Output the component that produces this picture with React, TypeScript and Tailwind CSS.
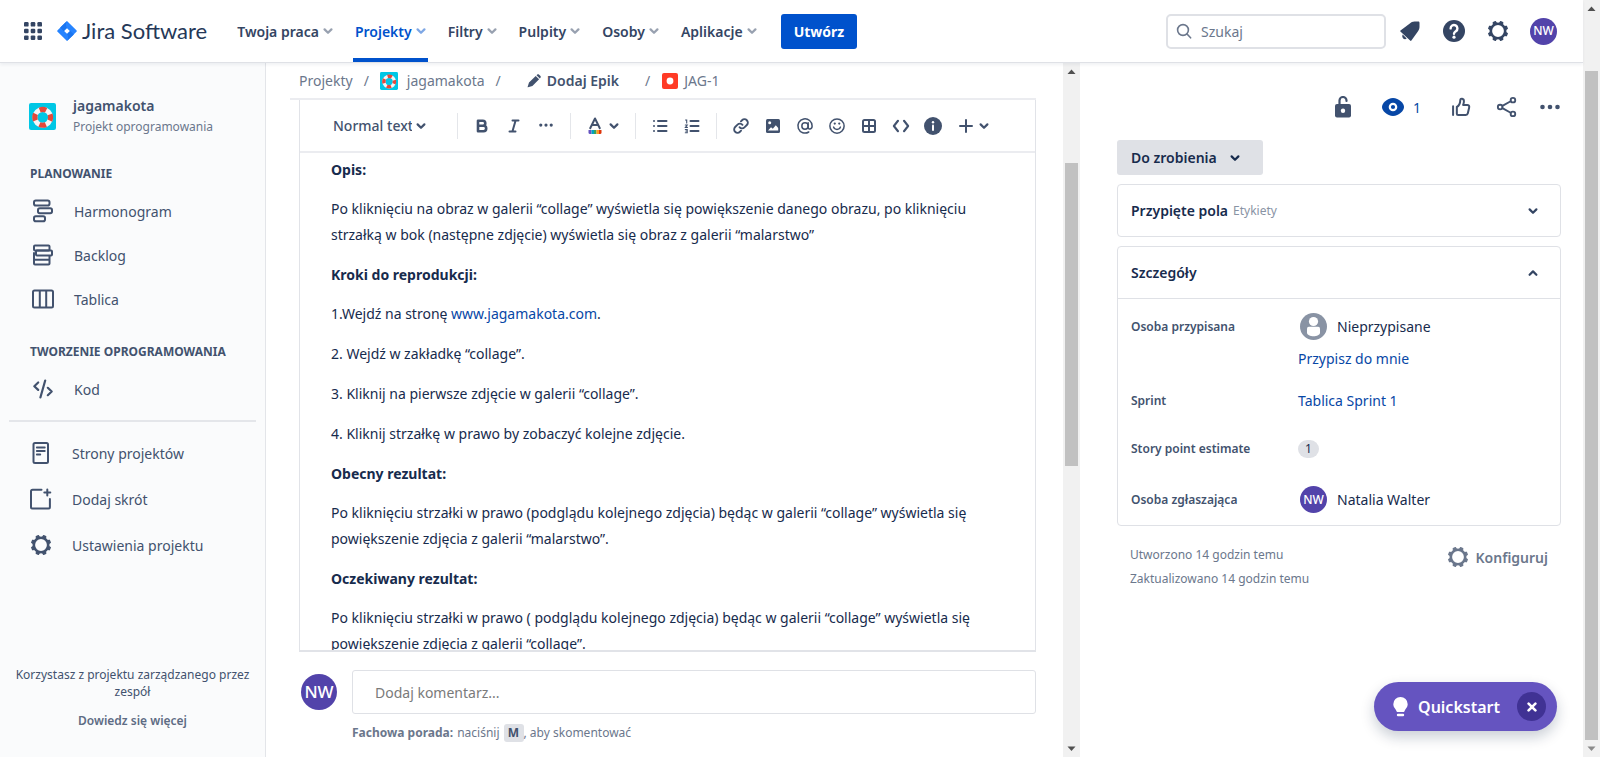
import React from "react";

type IconProps = { className?: string };

const Svg = ({ className = "size-6", children }: IconProps & { children: React.ReactNode }) => (
  <svg viewBox="0 0 24 24" className={`shrink-0 ${className}`} fill="none" stroke="currentColor" strokeWidth="2" strokeLinecap="round" strokeLinejoin="round" aria-hidden="true">
    {children}
  </svg>
);

const Chevron = ({ className = "size-[10px]", up = false }: IconProps & { up?: boolean }) => (
  <svg viewBox="0 0 10 10" className={`shrink-0 ${className}`} fill="none" stroke="currentColor" strokeWidth="2.2" strokeLinecap="round" strokeLinejoin="round" aria-hidden="true">
    <path d={up ? "M1.6 6.8 5 3.4l3.4 3.4" : "M1.6 3.4 5 6.8l3.4-3.4"} />
  </svg>
);

const Gear = ({ className }: IconProps) => (
  <Svg className={className}>
    <circle cx="12" cy="12" r="7.2" strokeWidth="2.6" />
    {[22.5, 67.5, 112.5, 157.5, 202.5, 247.5, 292.5, 337.5].map((a) => (
      <path key={a} d="M10.3 4.6 10.8 2.4h2.4l.5 2.200z" fill="currentColor" strokeWidth="1.2" transform={`rotate(${a} 12 12)`} />
    ))}
  </Svg>
);

const Lifebuoy = ({ className }: IconProps) => (
  <svg viewBox="0 0 26 26" className={`shrink-0 ${className}`} aria-hidden="true">
    <rect width="26" height="26" rx="2" fill="#00c7e5" />
    <circle cx="13.200" cy="13.800" r="7.600" fill="none" stroke="#f4f5f7" strokeWidth="4.800" />
    <circle cx="13.200" cy="13.800" r="7.600" fill="none" stroke="#e5493a" strokeWidth="5" strokeDasharray="6.400 5.540" strokeDashoffset="3.200" />
  </svg>
);

const Avatar = ({ className }: IconProps) => (
  <span className={`flex shrink-0 items-center justify-center rounded-full bg-[#5243aa] font-medium text-white ${className}`}>NW</span>
);

const AppGrid = () => (
  <svg viewBox="0 0 18 18" className="size-[18px]" fill="currentColor" aria-hidden="true">
    {[0, 6.7, 13.4].map((y) => [0, 6.7, 13.4].map((x) => <rect key={`${x}-${y}`} x={x} y={y} width="4.6" height="4.6" rx="1.2" />))}
  </svg>
);

const JiraMark = () => (
  <svg viewBox="0 0 20 20" className="size-5" aria-hidden="true">
    <path d="M10 0 19.4 9.2a1.1 1.1 0 0 1 0 1.6L10 20 .6 10.8a1.1 1.1 0 0 1 0-1.6z" fill="#2684ff" />
    <path d="M10 0c-1.600 2-1.500 5 0 7L6.800 10.200 3.200 6.600z" fill="#1a75f0" />
    <path d="M10 20c1.600-2 1.500-5 0-7l3.200-3.200 3.600 3.600z" fill="#1a75f0" />
    <path d="M10 7.200 12.800 10 10 12.800 7.200 10z" fill="#fff" />
  </svg>
);

const Roadmap = () => (
  <Svg className="size-6">
    <rect x="3" y="1.500" width="15.500" height="5" rx="1.800" />
    <rect x="7" y="9.300" width="14" height="5" rx="1.800" />
    <rect x="3" y="17.200" width="11" height="5" rx="1.800" />
  </Svg>
);
const Backlog = () => (
  <Svg className="size-6">
    <rect x="3" y="2.500" width="15.500" height="5" rx="1" />
    <rect x="5" y="7.500" width="16" height="5" rx="1" />
    <path d="M3 10v10.500a1 1 0 0 0 1 1h13.500a1 1 0 0 0 1-1V13M3 16.700h15.500" />
  </Svg>
);
const Board = () => (
  <Svg className="size-6">
    <rect x="2" y="3.500" width="20" height="17" rx="1.500" />
    <path d="M8.800 4v16M15.200 4v16" />
  </Svg>
);
const CodeSlash = () => (
  <Svg className="size-6">
    <path d="M7.200 5.500 3.300 9.200l3.900 3.700M14.200 3.500 9.400 20.500M16.800 10.800l3.900 3.700-3.900 3.700" strokeWidth="2.200" />
  </Svg>
);
const PageIcon = () => (
  <Svg className="size-6">
    <rect x="4.500" y="2" width="14.500" height="20" rx="1.500" />
    <path d="M7.800 6.500h8M7.800 10h8M7.800 13.500h3.500" strokeWidth="1.800" />
  </Svg>
);
const AddShortcut = () => (
  <Svg className="size-6">
    <path d="M12.500 2.800H3.600A1.600 1.600 0 0 0 2 4.400v15.500a1.600 1.600 0 0 0 1.600 1.600h15.700a1.600 1.600 0 0 0 1.600-1.600V12" />
    <path d="M18.300 2.600v6M15.300 5.600h6" />
  </Svg>
);

const Dots = ({ className }: IconProps) => (
  <svg viewBox="0 0 20 6" className={`shrink-0 ${className}`} fill="currentColor" aria-hidden="true">
    <circle cx="2.500" cy="3" r="2.300" />
    <circle cx="10" cy="3" r="2.300" />
    <circle cx="17.500" cy="3" r="2.300" />
  </svg>
);

const nav = [
  { label: "Twoja praca" },
  { label: "Projekty", active: true },
  { label: "Filtry" },
  { label: "Pulpity" },
  { label: "Osoby" },
  { label: "Aplikacje" },
];

function Header() {
  return (
    <header className="z-10 flex h-[63px] shrink-0 items-center border-b border-[#dfe1e6] bg-white pr-[26px] pl-6 text-[#344563] shadow-[0_2px_3px_rgba(9,30,66,0.06)]">
      <button aria-label="Aplikacje Atlassian" className="text-[#344563]"><AppGrid /></button>
      <a href="#" className="ml-[15px] flex items-center gap-[5px] text-[#253858]">
        <JiraMark />
        <span className="font-['Lato','Noto_Sans',sans-serif] text-[22px] leading-6">Jira Software</span>
      </a>
      <nav className="ml-[28px] flex gap-[18px] self-stretch">
        {nav.map((n) => (
          <button key={n.label} className={n.active ? "flex items-center gap-1 border-b-4 border-[#0052cc] px-[2px] pt-1 text-[#0052cc]" : "flex items-center gap-1 border-b-4 border-transparent px-[2px] pt-1"}>
            <span className="text-[14px] font-semibold">{n.label}</span>
            <Chevron className="size-[10px] opacity-50" />
          </button>
        ))}
      </nav>
      <button className="ml-[22px] h-[35px] rounded-[3px] bg-[#0052cc] px-[13px] text-[14px] font-bold text-white">Utwórz</button>
      <div className="ml-auto flex items-center">
        <label className="flex h-[35px] w-[220px] items-center gap-[9px] rounded-[5px] border-2 border-[#dfe1e6] px-[8px]">
          <svg viewBox="0 0 16 16" className="size-4 shrink-0 text-[#6b778c]" fill="none" stroke="currentColor" strokeWidth="1.600" strokeLinecap="round" aria-hidden="true">
            <circle cx="7" cy="7" r="5.400" />
            <path d="m11 11 3.600 3.800" />
          </svg>
          <input aria-label="Szukaj" placeholder="Szukaj" className="w-full min-w-0 bg-transparent text-[14px] outline-none placeholder:text-[#6b778c]" />
        </label>
        <button aria-label="Powiadomienia" className="ml-3">
          <svg viewBox="0 0 24 24" className="size-6" fill="currentColor" aria-hidden="true">
            <path d="M2.500 11.400 11.500 4.800c1.800-1.300 3-2.200 5-2.200h3.700c.8 0 1.300.5 1.300 1.300v4c0 1.900-.7 3-2 5L13.400 21.500c-.3.500-.9.500-1.300 0L2.400 12.500c-.3-.3-.3-.8.1-1.100z" />
            <path d="M4.700 15.600 8.700 19.600c-1 .9-2.500.9-3.500-.1s-1.300-2.700-.5-3.900z" />
          </svg>
        </button>
        <button aria-label="Pomoc" className="ml-5">
          <svg viewBox="0 0 24 24" className="size-6" aria-hidden="true">
            <circle cx="12" cy="12" r="11" fill="currentColor" />
            <path d="M8.600 9.400a3.400 3.400 0 1 1 5.300 2.800c-1.200.8-1.900 1.200-1.900 2.600" fill="none" stroke="#fff" strokeWidth="2.400" strokeLinecap="round" />
            <circle cx="12" cy="18.200" r="1.600" fill="#fff" />
          </svg>
        </button>
        <button aria-label="Ustawienia" className="ml-5"><Gear className="size-6" /></button>
        <button aria-label="Profil" className="ml-5"><Avatar className="size-[27px] text-[12px]" /></button>
      </div>
    </header>
  );
}

function SideLink({ icon, label, tight = false }: { icon: React.ReactNode; label: string; tight?: boolean }) {
  return (
    <a href="#" className={tight ? "flex h-[46px] items-center gap-[19px] pl-[29px]" : "flex h-11 items-center gap-[19px] pl-[31px]"}>
      {icon}
      <span className="text-[14px]">{label}</span>
    </a>
  );
}

function Sidebar() {
  return (
    <aside className="flex w-[266px] shrink-0 flex-col border-r border-[#e3e5e9] bg-[#fafbfc] text-[#42526e]">
      <div className="mt-8 flex items-center gap-[17px] pl-[29px]">
        <Lifebuoy className="size-[27px]" />
        <div>
          <div className="text-[14px] leading-[21px] font-semibold">jagamakota</div>
          <div className="text-[12px] leading-[21px] text-[#6b778c]">Projekt oprogramowania</div>
        </div>
      </div>
      <h2 className="mt-[29px] pl-[30px] text-[12px] leading-4 font-bold">PLANOWANIE</h2>
      <nav className="mt-[7px]">
        <SideLink icon={<Roadmap />} label="Harmonogram" />
        <SideLink icon={<Backlog />} label="Backlog" />
        <SideLink icon={<Board />} label="Tablica" />
      </nav>
      <h2 className="mt-[23px] pl-[30px] text-[12px] leading-4 font-bold">TWORZENIE OPROGRAMOWANIA</h2>
      <nav className="mt-[7px]">
        <SideLink icon={<CodeSlash />} label="Kod" />
      </nav>
      <hr className="mx-[9px] mt-[9px] mb-2 border-t-2 border-[#e4e6ea]" />
      <nav>
        <SideLink tight icon={<PageIcon />} label="Strony projektów" />
        <SideLink tight icon={<AddShortcut />} label="Dodaj skrót" />
        <SideLink tight icon={<Gear className="size-6" />} label="Ustawienia projektu" />
      </nav>
      <div className="mt-auto mb-7 text-center text-[12px] leading-[17px]">
        <p>Korzystasz z projektu zarządzanego przez zespół</p>
        <a href="#" className="mt-3 block font-semibold text-[#5e6c84]">Dowiedz się więcej</a>
      </div>
    </aside>
  );
}

const Tool = ({ label, children }: { label: string; children: React.ReactNode }) => (
  <button aria-label={label} className="flex size-8 shrink-0 items-center justify-center">{children}</button>
);
const Rule = () => <span className="mx-2 h-[26px] w-px shrink-0 bg-[#e4e6ea]" />;

function Toolbar() {
  return (
    <div className="flex h-[53px] shrink-0 items-center border-b-2 border-[#ebecf0] pl-[33px] text-[#42526e]">
      <button className="mr-[23px] flex w-[93px] items-center gap-1 text-[14px] font-medium">
        <span className="w-[79px] overflow-hidden text-left whitespace-nowrap">Normal text</span>
        <Chevron />
      </button>
      <Rule />
      <Tool label="Pogrubienie">
        <svg viewBox="0 0 16 16" className="size-4" fill="none" stroke="currentColor" strokeWidth="2.600" strokeLinejoin="round" aria-hidden="true">
          <path d="M4 2.800h4.800a2.500 2.500 0 0 1 0 5H4zM4 7.800h5.500a2.700 2.700 0 0 1 0 5.400H4z" />
        </svg>
      </Tool>
      <Tool label="Kursywa">
        <svg viewBox="0 0 16 16" className="size-4" fill="none" stroke="currentColor" strokeWidth="2" strokeLinecap="round" aria-hidden="true">
          <path d="M6.500 2.500h6M3.500 13.500h6M9.600 2.500l-3.200 11" />
        </svg>
      </Tool>
      <Tool label="Więcej formatowania"><Dots className="w-[14px]" /></Tool>
      <Rule />
      <button aria-label="Kolor tekstu" className="mx-2 flex items-center gap-[6px]">
        <svg viewBox="0 0 16 18" className="h-[18px] w-4" aria-hidden="true">
          <path d="M3.200 11.200 8 1.500l4.800 9.700M5 8h6" fill="none" stroke="currentColor" strokeWidth="2" strokeLinecap="round" strokeLinejoin="round" />
          <path d="M1.500 13h3v4h-1.500a1.500 1.500 0 0 1-1.500-1.500z" fill="#6554c0" />
          <path d="M4.500 13H7v4H4.500z" fill="#00a3bf" />
          <path d="M7 13h2.500v4H7z" fill="#36a35e" />
          <path d="M9.500 13H12v4H9.500z" fill="#ff991f" />
          <path d="M12 13h2.500v2.500A1.500 1.500 0 0 1 13 17h-1z" fill="#de350b" />
        </svg>
        <Chevron />
      </button>
      <Rule />
      <Tool label="Lista punktowana">
        <svg viewBox="0 0 16 16" className="size-4" fill="none" stroke="currentColor" strokeWidth="2" strokeLinecap="round" aria-hidden="true">
          <path d="M2 3h.01M2 8h.01M2 13h.01M6 3h8.500M6 8h8.500M6 13h8.500" />
        </svg>
      </Tool>
      <Tool label="Lista numerowana">
        <svg viewBox="0 0 16 16" className="size-4" fill="none" stroke="currentColor" strokeWidth="2" strokeLinecap="round" aria-hidden="true">
          <path d="M6.500 3h8M6.500 8h8M6.500 13h8" />
          <path d="M1.500 2h1.200v3M1.300 7h1.900L1.400 9.400h2M1.300 11.500h1.900v3.200H1.300M1.800 13h1.300" strokeWidth="1.100" />
        </svg>
      </Tool>
      <Rule />
      <Tool label="Link">
        <Svg className="size-[18px]">
          <path d="M10 13.500a4.500 4.500 0 0 0 6.600.4l3.200-3.200a4.500 4.500 0 0 0-6.400-6.400l-1.500 1.500M14 10.500a4.500 4.500 0 0 0-6.600-.4l-3.200 3.200a4.500 4.500 0 0 0 6.400 6.400l1.500-1.500" strokeWidth="2.500" />
        </Svg>
      </Tool>
      <Tool label="Obraz">
        <svg viewBox="0 0 16 16" className="size-4" aria-hidden="true">
          <rect x="1" y="1" width="14" height="14" rx="1.500" fill="currentColor" />
          <circle cx="4.700" cy="4.800" r="1.500" fill="#fff" />
          <path d="M3 12.500 6 9.200l1.800 1.600 3-3.600 2.400 2.800v2.500z" fill="#fff" />
        </svg>
      </Tool>
      <Tool label="Wzmianka">
        <Svg className="size-[18px]">
          <circle cx="12" cy="12" r="4.200" />
          <path d="M16.200 7.500v6c0 3.800 5.300 3.300 5.300-1.500a9.500 9.500 0 1 0-4.500 8" />
        </Svg>
      </Tool>
      <Tool label="Emoji">
        <Svg className="size-[18px]">
          <circle cx="12" cy="12" r="9.500" />
          <path d="M7.500 13.500c1.200 4 7.800 4 9 0" />
          <path d="M9 8.800h.01M15 8.800h.01" strokeWidth="3" />
        </Svg>
      </Tool>
      <Tool label="Tabela">
        <svg viewBox="0 0 16 16" className="size-4" fill="none" stroke="currentColor" strokeWidth="2" aria-hidden="true">
          <rect x="2" y="2" width="12" height="12" rx="1.500" />
          <path d="M8 2v12M2 8h12" />
        </svg>
      </Tool>
      <Tool label="Fragment kodu">
        <Svg className="size-[18px]"><path d="M8 5 2.500 12 8 19M16 5l5.500 7L16 19" strokeWidth="2.800" /></Svg>
      </Tool>
      <Tool label="Panel informacyjny">
        <svg viewBox="0 0 18 18" className="size-[18px]" aria-hidden="true">
          <circle cx="9" cy="9" r="9" fill="currentColor" />
          <circle cx="9" cy="5.300" r="1.200" fill="#fff" />
          <path d="M9 8.500v4.500" stroke="#fff" strokeWidth="2" strokeLinecap="round" />
        </svg>
      </Tool>
      <button aria-label="Wstaw" className="ml-[10px] flex items-center gap-[6px]">
        <svg viewBox="0 0 14 14" className="size-[14px]" stroke="currentColor" strokeWidth="2" strokeLinecap="round" aria-hidden="true"><path d="M7 1v12M1 7h12" /></svg>
        <Chevron />
      </button>
    </div>
  );
}

const H = ({ children }: { children: React.ReactNode }) => <h3 className="mb-[13px] font-bold">{children}</h3>;
const P = ({ children }: { children: React.ReactNode }) => <p className="mb-[14px]">{children}</p>;

function Issue() {
  return (
    <main className="flex min-w-0 flex-1 flex-col pr-[27px] pl-6">
      <div className="flex h-[37px] shrink-0 items-center border-b-2 border-[#ebecf0] pl-[9px] text-[14px] text-[#6b778c]">
        <a href="#">Projekty</a>
        <span className="mx-[11px]">/</span>
        <a href="#" className="flex items-center gap-[9px]"><Lifebuoy className="size-[18px]" />jagamakota</a>
        <span className="mx-[11px]">/</span>
        <button className="ml-[15px] flex items-center gap-[6px] font-semibold text-[#42526e]">
          <svg viewBox="0 0 14 14" className="size-[14px]" fill="currentColor" aria-hidden="true">
            <path d="M2 8.600 8.700 1.900l3.400 3.400L5.400 12 1 13.300c-.3.100-.5-.2-.4-.4zM9.500 1.200 10.300.5c.5-.4 1.200-.4 1.600 0l1.600 1.600c.4.400.4 1.100 0 1.600l-.7.800z" />
          </svg>
          Dodaj Epik
        </button>
        <span className="mr-[12px] ml-[26px]">/</span>
        <svg viewBox="0 0 16 16" className="mr-[6px] size-4" aria-hidden="true">
          <rect width="16" height="16" rx="2" fill="#ff3b26" />
          <circle cx="8" cy="8" r="3.400" fill="#fff" />
        </svg>
        <a href="#">JAG-1</a>
      </div>
      <section className="ml-[9px] flex min-h-0 flex-1 flex-col border-x border-b-2 border-[#e1e3e8]">
        <Toolbar />
        <div className="min-h-0 flex-1 overflow-hidden px-[31px] pt-1 text-[14px] leading-[26px] text-[#172b4d]">
          <H>Opis:</H>
          <P>Po kliknięciu na obraz w galerii “collage” wyświetla się powiększenie danego obrazu, po kliknięciu strzałką w bok (następne zdjęcie) wyświetla się obraz z galerii “malarstwo”</P>
          <H>Kroki do reprodukcji:</H>
          <P>1.Wejdź na stronę <a href="#" className="text-[#0747a6]">www.jagamakota.com</a>.</P>
          <P>2. Wejdź w zakładkę “collage”.</P>
          <P>3. Kliknij na pierwsze zdjęcie w galerii “collage”.</P>
          <P>4. Kliknij strzałkę w prawo by zobaczyć kolejne zdjęcie.</P>
          <H>Obecny rezultat:</H>
          <P>Po kliknięciu strzałki w prawo (podglądu kolejnego zdjęcia) będąc w galerii “collage” wyświetla się powiększenie zdjęcia z galerii “malarstwo”.</P>
          <H>Oczekiwany rezultat:</H>
          <P>Po kliknięciu strzałki w prawo ( podglądu kolejnego zdjęcia) będąc w galerii “collage” wyświetla się powiększenie zdjęcia z galerii “collage”.</P>
        </div>
      </section>
      <div className="flex shrink-0 gap-[15px] pt-[18px] pb-[15px] pl-[11px]">
        <Avatar className="mt-1 size-9 text-[17px]" />
        <div className="min-w-0 flex-1">
          <input aria-label="Dodaj komentarz" placeholder="Dodaj komentarz..." className="block h-11 w-full rounded-[3px] border border-[#dfe1e6] px-[22px] text-[14px] outline-none placeholder:text-[#7a7a7a]" />
          <p className="mt-[10px] flex h-[18px] items-center text-[12px] text-[#6b778c]">
            <b className="mr-1 font-bold">Fachowa porada:</b>naciśnij
            <kbd className="ml-1 flex h-[18px] w-5 items-center justify-center rounded-[3px] bg-[#dfe1e6] font-[inherit] font-bold text-[#42526e]">M</kbd>, aby skomentować
          </p>
        </div>
      </div>
    </main>
  );
}

const Arrow = ({ down = false, className = "text-[#505050]" }: IconProps & { down?: boolean }) => (
  <svg viewBox="0 0 17 17" className={`size-[17px] shrink-0 ${className}`} fill="currentColor" aria-hidden="true">
    <path d={down ? "M4.500 6.500h8L8.500 11z" : "M4.500 11h8L8.500 6.500z"} />
  </svg>
);

function Details() {
  return (
    <aside className="flex w-[503px] shrink-0 flex-col pr-[22px] pl-[37px] text-[14px] text-[#172b4d]">
      <div className="mt-[29px] flex h-[30px] items-center justify-end pr-px text-[#42526e]">
        <button aria-label="Ograniczenia">
          <svg viewBox="0 0 18 22" className="h-[22px] w-[18px]" aria-hidden="true">
            <rect x="1" y="8" width="16" height="13.500" rx="2" fill="currentColor" />
            <path d="M5.500 8V4.500a3.500 3.500 0 0 1 7 0V5" fill="none" stroke="currentColor" strokeWidth="2.200" strokeLinecap="round" />
            <circle cx="9" cy="14.700" r="2.200" fill="#fff" />
          </svg>
        </button>
        <button aria-label="Obserwujący" className="ml-[30px] flex items-center gap-[9px] text-[#0747a6]">
          <svg viewBox="0 0 22 18" className="h-[18px] w-[22px]" aria-hidden="true">
            <path d="M11 0C17 0 22 5.500 22 9s-5 9-11 9S0 12.500 0 9s5-9 11-9z" fill="currentColor" />
            <circle cx="11" cy="9" r="3.200" fill="none" stroke="#fff" strokeWidth="2.200" />
          </svg>
          1
        </button>
        <button aria-label="Głosuj" className="ml-[30px]">
          <Svg className="size-5">
            <path d="M2.500 11v10.500M7 12c3-1.500 4-4 4.200-8.500.1-2 4.300-2 4.300 1.500 0 2-.5 3.500-1 4.500h5c1.800 0 2.700 1.500 2.300 3l-1.600 7c-.3 1.300-1.300 2-2.500 2H8.500c-1 0-1.500-.6-1.500-1.500z" strokeWidth="2.400" />
          </Svg>
        </button>
        <button aria-label="Udostępnij" className="ml-[25px]">
          <Svg className="size-[22px]">
            <circle cx="4.500" cy="12" r="2.500" />
            <circle cx="18.500" cy="4.500" r="2.500" />
            <circle cx="18.500" cy="19.500" r="2.500" />
            <path d="M7 10.800 16 5.800M7 13.200l9 5" />
          </Svg>
        </button>
        <button aria-label="Czynności" className="ml-[22px]"><Dots className="w-5" /></button>
      </div>
      <button className="mt-[18px] flex h-[35px] w-[146px] shrink-0 items-center gap-[13px] self-start rounded-[3px] bg-[#dfe1e6] pl-[14px] font-semibold">
        Do zrobienia <Chevron />
      </button>
      <button className="mt-[9px] flex h-[53px] shrink-0 items-center rounded-[4px] border border-[#dfe1e6] pr-[22px] pl-[13px]">
        <span className="font-semibold">Przypięte pola</span>
        <span className="ml-[5px] text-[12px] text-[#8993a4]">Etykiety</span>
        <Chevron className="ml-auto size-[10px] text-[#344563]" />
      </button>
      <section className="mt-[9px] shrink-0 rounded-[4px] border border-[#dfe1e6]">
        <button className="flex h-[52px] w-full items-center border-b border-[#dfe1e6] pr-[22px] pl-[13px]">
          <span className="font-semibold">Szczegóły</span>
          <Chevron up className="ml-auto size-[10px] text-[#344563]" />
        </button>
        <dl className="grid grid-cols-[167px_1fr] pt-[14px] pb-3 pl-[13px] [&_dt]:text-[12px] [&_dt]:font-semibold [&_dt]:text-[#42526e]">
          <dt className="leading-[27px]">Osoba przypisana</dt>
          <dd className="pb-[17px]">
            <div className="flex h-[27px] items-center gap-[10px] pl-[2px]">
              <svg viewBox="0 0 27 27" className="size-[27px]" aria-hidden="true">
                <circle cx="13.500" cy="13.500" r="13.500" fill="#8993a4" />
                <circle cx="13.500" cy="8.500" r="4.600" fill="#fff" />
                <path d="M7 15.500A1.800 1.800 0 0 1 8.800 13.700h9.400a1.800 1.800 0 0 1 1.800 1.800v4c0 5-13 5-13 0z" fill="#fff" />
              </svg>
              Nieprzypisane
            </div>
            <a href="#" className="mt-[6px] block leading-[26px] text-[#0747a6]">Przypisz do mnie</a>
          </dd>
          <dt className="leading-6">Sprint</dt>
          <dd className="h-12 leading-6"><a href="#" className="text-[#0747a6]">Tablica Sprint 1</a></dd>
          <dt className="leading-6">Story point estimate</dt>
          <dd className="h-[49px] pt-[3px]"><span className="flex h-[18px] w-[21px] items-center justify-center rounded-full bg-[#dfe1e6] text-[12px]">1</span></dd>
          <dt className="leading-[27px]">Osoba zgłaszająca</dt>
          <dd className="flex h-[27px] items-center gap-[10px] pl-[2px]"><Avatar className="size-[27px] text-[12px]" />Natalia Walter</dd>
        </dl>
      </section>
      <div className="mt-[17px] flex justify-between pr-[13px] pl-[13px] text-[#6b778c]">
        <div className="text-[12px] leading-6">
          <p>Utworzono 14 godzin temu</p>
          <p>Zaktualizowano 14 godzin temu</p>
        </div>
        <button className="flex h-7 items-center gap-[6px] font-semibold"><Gear className="size-6" />Konfiguruj</button>
      </div>
    </aside>
  );
}

export default function App() {
  return (
    <div className="flex h-screen overflow-hidden bg-white font-['Noto_Sans','Open_Sans',sans-serif]">
      <div className="relative flex min-w-0 flex-1 flex-col">
        <Header />
        <div className="flex min-h-0 flex-1">
          <Sidebar />
          <Issue />
          <div className="flex w-[17px] shrink-0 flex-col items-center bg-[#f1f1f1]">
            <Arrow />
            <div className="flex w-full flex-1 flex-col items-center">
              <div className="h-[12.500%] shrink-0" />
              <div className="h-[46%] w-[13px] shrink-0 bg-[#c1c1c1]" />
            </div>
            <Arrow down />
          </div>
          <Details />
        </div>
        <div className="absolute right-[26px] bottom-[26px] flex h-[49px] items-center rounded-full bg-[#6554c0] pr-[11px] pl-[19px] text-white shadow-[0_6px_14px_rgba(9,30,66,0.22)]">
          <button className="flex items-center gap-[10px] text-[16px] font-semibold">
            <svg viewBox="0 0 15 20" className="h-5 w-[15px]" fill="currentColor" aria-hidden="true">
              <path d="M7.500 0A7.200 7.200 0 0 1 14.700 7.200c0 3-2 4.300-2.900 6.200-.4 1-.8 1.600-1.600 1.600H4.800c-.8 0-1.200-.6-1.600-1.600C2.300 11.500.3 10.200.3 7.200A7.200 7.200 0 0 1 7.500 0z" />
              <rect x="3.800" y="16.800" width="7.400" height="2.400" rx="1.200" />
            </svg>
            Quickstart
          </button>
          <button aria-label="Zamknij" className="ml-[17px] flex size-[29px] items-center justify-center rounded-full bg-[#403294]">
            <svg viewBox="0 0 10 10" className="size-[10px]" stroke="currentColor" strokeWidth="2.600" strokeLinecap="round" aria-hidden="true"><path d="m1.600 1.600 6.800 6.800M8.400 1.600 1.600 8.400" /></svg>
          </button>
        </div>
      </div>
      <div className="flex w-[17px] shrink-0 flex-col items-center bg-[#f1f1f1]">
        <Arrow />
        <div className="mt-[54px] w-[13px] flex-1 bg-[#c1c1c1]" />
        <Arrow down className="text-[#8a8a8a]" />
      </div>
    </div>
  );
}
